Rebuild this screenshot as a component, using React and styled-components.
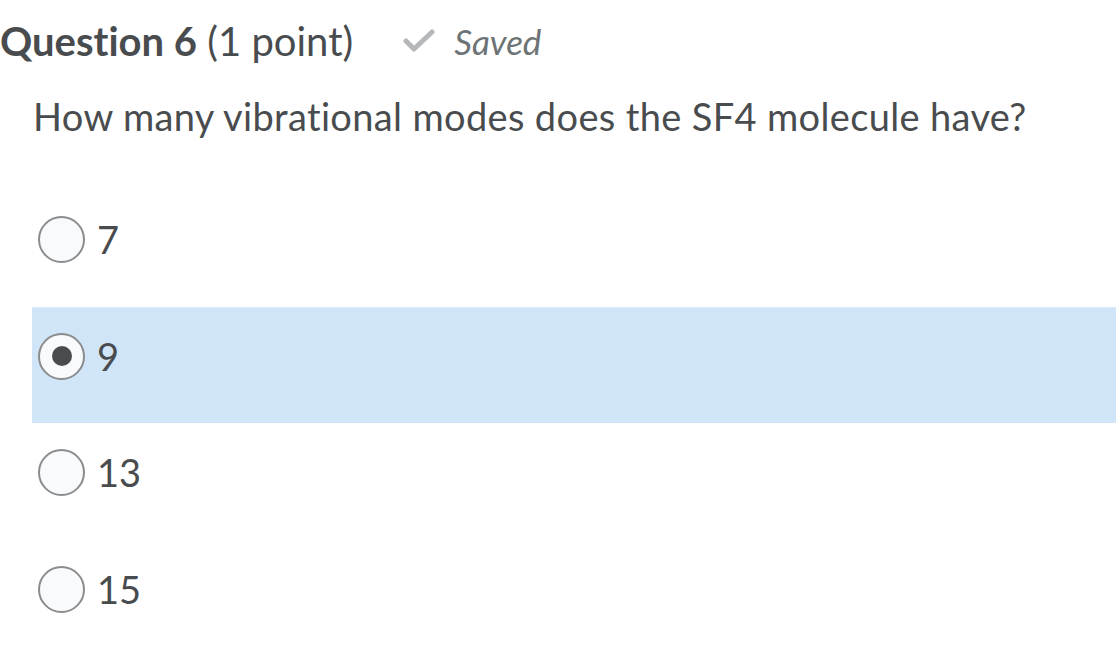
import React from 'react'
import styled, { createGlobalStyle } from 'styled-components'

const Global = createGlobalStyle`
  html, body {
    margin: 0;
    padding: 0;
    background: #ffffff;
  }
  body {
    font-family: Lato, "Open Sans", sans-serif;
    color: #494c4e;
    font-variant-ligatures: none;
  }
`

const Page = styled.div`
  width: 1116px;
  height: 657px;
  overflow: hidden;
`

const Header = styled.div`
  display: flex;
  align-items: center;
  height: 82px;
`

const Title = styled.h2`
  margin: 0;
  font-size: 40px;
  font-weight: 400;
  color: #494c4e;

  strong {
    font-weight: 700;
  }
`

const Status = styled.div`
  display: flex;
  align-items: center;
  margin-left: 50px;
  gap: 19px;
  font-style: italic;
  font-size: 35px;
  color: #6e7376;
`

const Question = styled.p`
  margin: 0 0 0 33px;
  font-size: 38px;
  letter-spacing: 0.35px;
  line-height: 68px;
  color: #494c4e;
`

const Options = styled.div`
  display: flex;
  flex-direction: column;
  margin: 40px 0 0 32px;
`

const Row = styled.label`
  display: flex;
  align-items: flex-start;
  height: 116.7px;
  padding: 26px 0 0 6px;
  gap: 12px;
  background: ${p => (p.$selected ? '#d1e5f8' : 'transparent')};
  box-shadow: ${p => (p.$selected ? 'inset 0 1px 0 #d9eaf9' : 'none')};
  box-sizing: border-box;
`

const Radio = styled.span`
  width: 47px;
  height: 47px;
  box-sizing: border-box;
  border-radius: 50%;
  border: 2px solid #8a8c8e;
  background: #f9fafc;
  display: flex;
  align-items: center;
  justify-content: center;
  flex-shrink: 0;

  &::after {
    content: '';
    display: ${p => (p.$checked ? 'block' : 'none')};
    width: 20px;
    height: 20px;
    border-radius: 50%;
    background: #494c4e;
  }
`

const Label = styled.span`
  font-size: 38px;
  line-height: 47px;
  color: #494c4e;
`

const Check = () => (
  <svg width="32" height="26" viewBox="0 0 32 26" fill="none">
    <polyline
      points="3 13, 11 21, 29 4"
      stroke="#b4b8bb"
      strokeWidth="5"
      strokeLinecap="round"
      strokeLinejoin="round"
    />
  </svg>
)

const answers = ['7', '9', '13', '15']

const App = () => {
  const chosen = '9'
  return (
    <Page>
      <Global />
      <Header>
        <Title>
          <strong>Question 6</strong> (1 point)
        </Title>
        <Status>
          <Check />
          Saved
        </Status>
      </Header>
      <Question>How many vibrational modes does the SF4 molecule have?</Question>
      <Options>
        {answers.map(a => (
          <Row key={a} $selected={a === chosen}>
            <Radio $checked={a === chosen} />
            <Label>{a}</Label>
          </Row>
        ))}
      </Options>
    </Page>
  )
}

export default App
